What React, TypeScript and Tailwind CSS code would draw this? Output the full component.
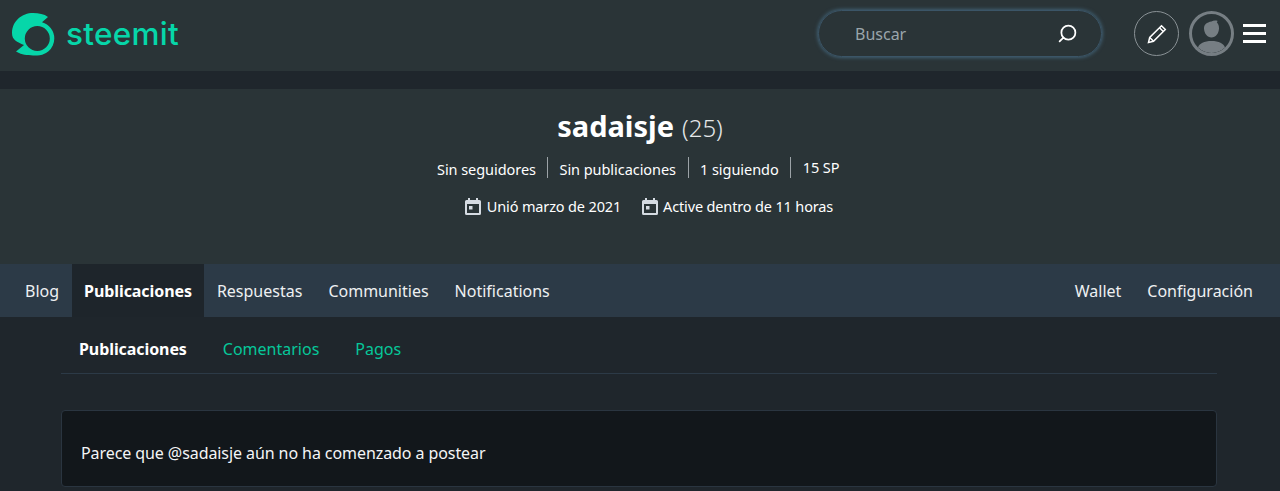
import { Search } from 'lucide-react';

const font = "font-['Noto_Sans','Liberation_Sans',sans-serif]";

function Logo() {
  return (
    <div className="flex items-center gap-[11px]">
      <svg width="44" height="46" viewBox="0 0 44 46" className="shrink-0 mt-[2px]">
        <path
          fill="#06d6a9"
          fillRule="evenodd"
          d="M1 21C1 9 11 1 22 1c6 0 11 1 15 4l-6 5.300A17 17 0 0 1 43.300 26.500 17 17 0 0 1 24 43.400C19 43.400 12 43 8 41l-3-1.500 8-6.500C6 30 1 28 1 21zM26.300 14A12.500 12.500 0 1 0 26.300 39 12.500 12.500 0 1 0 26.300 14z"
        />
      </svg>
      <span className="font-['Inter',sans-serif] font-medium text-[31.500px] leading-none tracking-[0.3px] text-[#06d6a9]">
        steemit
      </span>
    </div>
  );
}

function CalendarIcon() {
  return (
    <svg width="16" height="17" viewBox="0 0 16 17" className="shrink-0">
      <path
        fill="#d5dbe2"
        fillRule="evenodd"
        d="M3 0h2v2h6V0h2v2h1.500A1.500 1.500 0 0 1 16 3.500v12a1.500 1.500 0 0 1-1.500 1.500h-13A1.500 1.500 0 0 1 0 15.500v-12A1.500 1.500 0 0 1 1.500 2H3V0zM2 6v9h12V6H2zm2 2h3.500v3.500H4V8z"
      />
    </svg>
  );
}

function Header() {
  return (
    <header className="h-[71px] bg-[#2a3437] flex items-center justify-between pl-[11px] pr-[14px] pb-[4px]">
      <Logo />
      <div className="flex items-center">
        <div className="w-[284px] h-[47px] mr-[32px] rounded-full border border-[#3b5567] shadow-[0_0_4px_#4b7590] flex items-center justify-between pl-[36px] pr-[23px]">
          <span className="text-[16px] text-[#9aa5ab]">Buscar</span>
          <Search size={21} strokeWidth={2} className="text-white -scale-x-100" />
        </div>
        <div className="w-[45px] h-[45px] rounded-full border border-[#8a9296] flex items-center justify-center mr-[10px]">
          <svg width="22" height="22" viewBox="0 0 22 22" fill="none" stroke="#fff" strokeWidth="1.500">
            <path d="M2.500 19.500l1.200-5L15.500 2.700l3.800 3.800L7.500 18.300l-5 1.200z" />
            <path d="M13.500 4.700l3.800 3.800M3.700 14.500l3.800 3.800" />
          </svg>
        </div>
        <div className="w-[45px] h-[45px] rounded-full border-[3px] border-[#767e83] overflow-hidden mr-[9px]">
          <svg width="39" height="39" viewBox="0 0 39 39">
            <path
              fill="#767e83"
              d="M19.500 7.500c1.600-1 3.800-1.300 6.300-.6-.8.500-1 1-.8 1.600 1.300 1.600 2 3.500 2 5.700 0 5-3.400 9.300-7.500 9.300S12 19.200 12 14.200c0-3.300 2.700-6 7.500-6.700zM6 33.500c1.200-4 6.300-6.500 13.500-6.500S31.800 29.500 33 33.500c-3 3-8 5.500-13.500 5.500S9 36.500 6 33.500z"
            />
          </svg>
        </div>
        <div className="w-[23px] flex flex-col gap-[5px]">
          <div className="h-[3px] bg-white" />
          <div className="h-[3px] bg-white" />
          <div className="h-[3px] bg-white" />
        </div>
      </div>
    </header>
  );
}

function Hero() {
  const stats = ['Sin seguidores', 'Sin publicaciones', '1 siguiendo', '15 SP'];
  return (
    <section className="h-[175px] bg-[#2a3437] flex flex-col items-center text-white">
      <div className="mt-[18px] h-[38px] flex items-baseline gap-[8px] leading-[38px]">
        <span className="text-[29px] font-bold">sadaisje</span>
        <span className="text-[24px] font-light text-[#e6e8ea]">(25)</span>
      </div>
      <div className="mt-[12px] pl-[8px] flex text-[14.500px] tracking-[-0.05px] leading-[21px] h-[21px]">
        {stats.map((s, i) => (
          <span
            key={s}
            className={
              i === 0
                ? 'pr-[11px] pt-[2px]'
                : 'px-[11.500px] border-l border-[#9ca3a7] ' + (i === 3 ? '' : 'pt-[2px]')
            }
          >
            {s}
          </span>
        ))}
      </div>
      <div className="mt-[18px] pl-[18px] flex items-center text-[14.500px] tracking-[-0.15px] leading-[20px]">
        <CalendarIcon />
        <span className="ml-[6px]">Unió marzo de 2021</span>
        <span className="ml-[21px]"><CalendarIcon /></span>
        <span className="ml-[5px]">Active dentro de 11 horas</span>
      </div>
    </section>
  );
}

function Tabs() {
  const left = ['Blog', 'Publicaciones', 'Respuestas', 'Communities', 'Notifications'];
  return (
    <nav className="h-[53px] bg-[#2c3a47] flex justify-between text-[16px] text-[#eef0f2] pl-[12px] pr-[27px]">
      <ul className="flex">
        {left.map((t) =>
          t === 'Publicaciones' ? (
            <li key={t} className="bg-[#1e252b] px-[12px] flex items-center font-bold tracking-[-0.08px] text-white">
              {t}
            </li>
          ) : (
            <li key={t} className="px-[13px] flex items-center">
              {t}
            </li>
          ),
        )}
      </ul>
      <ul className="flex">
        <li className="px-[13px] flex items-center">Wallet</li>
        <li className="pl-[13px] flex items-center">Configuración</li>
      </ul>
    </nav>
  );
}

function Content() {
  return (
    <main className="flex-1 pl-[61px] pr-[63px]">
      <div className="h-[57px] border-b border-[#2c3a47] flex items-center pl-[18px] pt-[8px] text-[16px]">
        <span className="font-bold tracking-[-0.08px] text-white">Publicaciones</span>
        <span className="ml-[36px] text-[#06c79a]">Comentarios</span>
        <span className="ml-[36px] text-[#06c79a]">Pagos</span>
      </div>
      <div className="mt-[36px] h-[77px] bg-[#12171b] border border-[#2a3540] rounded-[4px] flex items-center pl-[19px] pt-[9px] text-[16px] tracking-[-0.08px] text-[#f4f5f6]">
        Parece que @sadaisje aún no ha comenzado a postear
      </div>
    </main>
  );
}

export default function App() {
  return (
    <div className={`${font} h-[491px] overflow-hidden bg-[#1f262c] flex flex-col`}>
      <Header />
      <div className="h-[18px] bg-[#1f262c] shrink-0" />
      <Hero />
      <Tabs />
      <Content />
    </div>
  );
}
